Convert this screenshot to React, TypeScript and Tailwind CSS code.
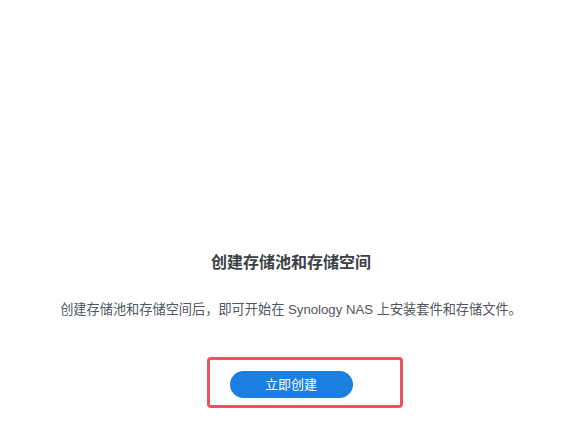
import React from "react";

export default function App() {
  const font = { fontFamily: '"Liberation Sans", "Noto Sans CJK SC", sans-serif' };
  return (
    <div className="relative w-[570px] h-[425px] bg-white overflow-hidden" style={font}>
      <div className="flex flex-col items-center pl-[12px] pt-[251px]">
        <div className="text-[16px] leading-[24px] font-bold text-[#3b4047]">创建存储池和存储空间</div>
        <div className="mt-[25px] text-[13.2px] leading-[20px] text-[#50565e]">
          创建存储池和存储空间后，即可开始在 Synology NAS 上安装套件和存储文件。
        </div>
        <button className="mt-[51px] w-[123px] h-[27px] rounded-full bg-[#1b7fe0] text-white text-[13px] leading-[27px]">
          立即创建
        </button>
      </div>
      <div className="absolute left-[207px] top-[357px] w-[196px] h-[51px] border-[3px] border-[#e8545e] rounded-[4px]" />
    </div>
  );
}
